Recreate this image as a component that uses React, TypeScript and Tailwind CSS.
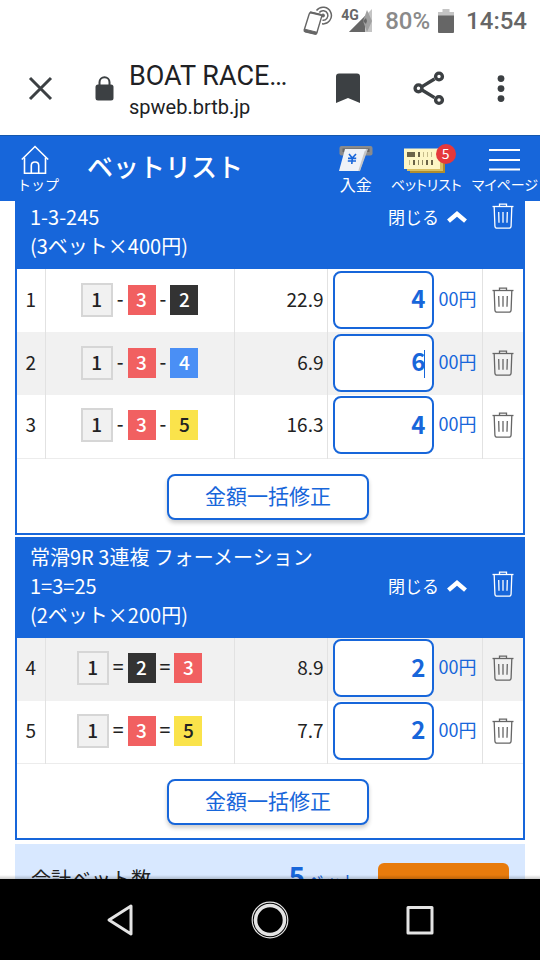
import React from "react";

type Bet = {
  no: number;
  boats: number[];
  odds: string;
  amount: string;
  focused?: boolean;
};

const firstBets: Bet[] = [
  { no: 1, boats: [1, 3, 2], odds: "22.9", amount: "4" },
  { no: 2, boats: [1, 3, 4], odds: "6.9", amount: "6", focused: true },
  { no: 3, boats: [1, 3, 5], odds: "16.3", amount: "4" },
];

const secondBets: Bet[] = [
  { no: 4, boats: [1, 2, 3], odds: "8.9", amount: "2" },
  { no: 5, boats: [1, 3, 5], odds: "7.7", amount: "2" },
];

const boatStyles: Record<number, string> = {
  1: "h-[34px] w-8 border-2 border-[#d6d6d6] bg-[#f1f1f1] text-[#222222]",
  2: "h-[30px] w-7 bg-[#333333] text-white",
  3: "h-[30px] w-7 bg-[#f16061] text-white",
  4: "h-[30px] w-7 bg-[#4a8ff5] text-white",
  5: "h-[30px] w-7 bg-[#fae34b] text-[#222222]",
};

const TrashIcon = () => (
  <svg width="22" height="26" viewBox="0 0 22 26" fill="none" stroke="currentColor" strokeWidth="1.3">
    <path d="M0.5 3.5H21.5" />
    <path d="M7.5 3.5V1.2H14.5V3.5" />
    <path d="M2.2 4L2.9 23Q3 25.2 5 25.2H17Q19 25.2 19.1 23L19.8 4" />
    <path d="M6.7 9L7 19.8M11 9V19.8M15.3 9L15 19.8" />
  </svg>
);

const StatusBar = () => (
  <div className="flex h-[42px] shrink-0 items-center justify-end pr-[13px] font-[Roboto,sans-serif] text-2xl leading-none font-medium">
    <svg width="30" height="30" viewBox="0 0 30 30" fill="none" stroke="#666" className="mr-2">
      <path
        d="M8.5 6.5L17.6 8.6Q19 9 18.7 10.4L13.8 27Q13.4 28.4 12 28L2.2 25.7Q0.9 25.4 1.2 24L6.2 8Q6.8 6.2 8.5 6.5Z"
        strokeWidth="1.4"
      />
      <path d="M1.8 23.2L13.8 26.2L13 28.2L2 25.6Z" fill="#666" strokeWidth="1" />
      <path d="M6.8 6.2L18.4 9" strokeWidth="2" />
      <circle cx="20" cy="9.5" r="1.5" fill="#666" />
      <path d="M16.3 6.5A4.8 4.8 0 1 1 19.5 14.2" strokeWidth="1.5" />
      <path d="M13.5 4.5A8.3 8.3 0 1 1 19 17.8" strokeWidth="1.5" />
    </svg>
    <div className="relative mr-3 h-6 w-8">
      <svg width="32" height="24" viewBox="0 0 32 24">
        <path d="M8 23L31 0V23Z" fill="#c4c4c4" />
        <path d="M8 23L24 7V23Z" fill="#666" />
        <path d="M26 1L31 12L26 23L22 12Z" fill="#a0a0a0" />
        <path d="M22 12L25 9L26 12L25 15Z" fill="#666" />
      </svg>
      <span className="absolute top-0 left-0 text-sm leading-3 font-bold text-[#666]">4G</span>
    </div>
    <span className="mr-2 text-[#8a8a8a]">80%</span>
    <svg width="16" height="24" viewBox="0 0 16 24" className="mr-3">
      <path d="M4.5 0H11.5V3H16V8H0V3H4.5Z" fill="#c4c4c4" />
      <path d="M0 6.5H16V23Q16 24 15 24H1Q0 24 0 23Z" fill="#666" />
    </svg>
    <span className="text-[#666]">14:54</span>
  </div>
);

const BrowserBar = () => (
  <div className="flex h-[93px] shrink-0 items-center bg-white pr-6 pl-7 font-[Roboto,sans-serif] text-[#202124]">
    <button type="button" aria-label="閉じる" className="mr-[42px]">
      <svg width="25" height="25" viewBox="0 0 25 25" stroke="#3c4043" strokeWidth="3">
        <path d="M2 2L23 23M23 2L2 23" />
      </svg>
    </button>
    <svg width="19" height="25" viewBox="0 0 19 25" className="mr-[15px]">
      <path d="M4.5 10V6.2A5 5 0 0 1 14.5 6.2V10" fill="none" stroke="#3c4043" strokeWidth="2" />
      <rect x="0.5" y="8.5" width="18" height="16" rx="2.5" fill="#3c4043" />
    </svg>
    <div className="flex-1 pt-1 whitespace-nowrap">
      <p className="text-[27px] leading-8">BOAT RACE…</p>
      <p className="text-xl leading-[30px]">spweb.brtb.jp</p>
    </div>
    <button type="button" aria-label="ブックマーク" className="mr-[53px]">
      <svg width="24" height="32" viewBox="0 0 24 32" fill="#3c4043">
        <path d="M3 0.5H21Q24 0.5 24 3.5V30L12 25L0 30V3.5Q0 0.5 3 0.5Z" />
      </svg>
    </button>
    <button type="button" aria-label="共有" className="mr-[41px]">
      <svg width="32" height="36" viewBox="0 0 32 36" fill="none" stroke="#3c4043" strokeWidth="3.4">
        <path d="M9 15.6L21.5 8M9 19L21.5 26.6" />
        <circle cx="5.5" cy="17.3" r="3.4" />
        <circle cx="26" cy="5.5" r="3.4" />
        <circle cx="26" cy="29" r="3.4" />
      </svg>
    </button>
    <button type="button" aria-label="メニュー" className="w-[30px]">
      <svg width="30" height="28" viewBox="0 0 30 28" fill="#3c4043">
        <circle cx="15" cy="3.6" r="3.4" />
        <circle cx="15" cy="13.6" r="3.4" />
        <circle cx="15" cy="23.6" r="3.4" />
      </svg>
    </button>
  </div>
);

const AppHeader = () => (
  <header className="flex h-[66px] shrink-0 items-start border-t border-[#1558ad] bg-[#1766da] pt-[9px] pr-0.5 text-sm leading-[18px] whitespace-nowrap text-white">
    <a href="#top" className="ml-[17px] flex w-[42px] flex-col items-center">
      <svg width="28" height="30" viewBox="0 0 28 30" fill="none" stroke="currentColor" strokeWidth="1.6" className="mr-1.5">
        <path d="M0.8 14.5L14 1.5L27.2 14.5" />
        <path d="M3.5 12.5V28.2H24.5V12.5" />
        <path d="M10.3 28V20.5Q10.3 17 14 17Q17.7 17 17.7 20.5V28" />
      </svg>
      トップ
    </a>
    <h1 className="ml-7 flex-1 text-[26px] leading-[42px] font-medium">ベットリスト</h1>
    <a href="#deposit" className="mr-[18px] flex flex-col items-center text-base leading-[18px]">
      <svg width="34" height="30" viewBox="0 0 34 30">
        <rect x="0.5" y="1" width="33" height="9.5" rx="2" fill="#8b8b8b" />
        <rect x="3.5" y="3.5" width="27" height="3.5" fill="#666" />
        <path d="M24 4H29L21 26H15Z" fill="#c4c6c8" />
        <path d="M6 4H27L20 26H0Z" fill="#eef2f7" />
        <path d="M20 26L26.5 6" fill="none" stroke="#c4c6c8" strokeWidth="1.5" />
        <path d="M10 9L13.3 13L17 9M13.3 13L12.8 19M9 13.4H17.2M8.8 16H17" fill="none" stroke="#1766da" strokeWidth="1.6" />
      </svg>
      入金
    </a>
    <a href="#betlist" className="relative mr-2.5 flex flex-col items-center [font-feature-settings:'palt']">
      <svg width="44" height="30" viewBox="0 0 44 30">
        <path d="M6 7H41V28H6Z" fill="#b08d2e" />
        <path d="M3 5H39V26H3Z" fill="#d8bf63" />
        <path d="M0 3.5H36V24H0Z" fill="#fdf6c5" />
        <path d="M3 7H11V12H3ZM14 7H16V12H14Z" fill="#6b6448" />
        <path d="M19 7H20V12H19ZM23 7H24V12H23ZM27 7H28V12H27ZM5 15H6V20H5Z" fill="#c5bb8a" />
        <path d="M9 15H11V20H9ZM22 15H24V20H22ZM27 15H29V20H27Z" fill="#6b6448" />
        <path d="M14 15H15V20H14ZM18 15H19V20H18Z" fill="#8f8862" />
      </svg>
      ベットリスト
      <span className="absolute -top-px right-1.5 flex size-5 items-center justify-center rounded-full bg-[#e5383b] pb-0.5">
        5
      </span>
    </a>
    <a href="#mypage" className="flex flex-col items-center [font-feature-settings:'palt']">
      <svg width="31" height="30" viewBox="0 0 31 30" stroke="currentColor" strokeWidth="2">
        <path d="M0 5H31M0 15H31M0 24.5H31" />
      </svg>
      マイページ
    </a>
  </header>
);

const GroupActions = () => (
  <div className="flex h-[29px] shrink-0 items-center pr-[9px]">
    <button type="button" className="mr-[25px] flex items-center gap-2 text-[17px]">
      閉じる
      <svg width="20" height="13" viewBox="0 0 20 13" fill="none" stroke="currentColor" strokeWidth="4.4">
        <path d="M1.5 11.2L10 3.8L18.5 11.2" />
      </svg>
    </button>
    <button type="button" aria-label="グループを削除" className="pb-0.5">
      <TrashIcon />
    </button>
  </div>
);

const BetTable = ({ bets, separator, startGray }: { bets: Bet[]; separator: string; startGray?: boolean }) => (
  <table className="w-full table-fixed border-collapse text-[19px] leading-7">
    <colgroup>
      <col className="w-7" />
      <col />
      <col className="w-[93px]" />
      <col className="w-[155px]" />
      <col className="w-[41px]" />
    </colgroup>
    <tbody>
      {bets.map((bet, i) => (
        <tr
          key={bet.no}
          className={`h-[63px] last:border-b last:border-[#ececec] ${(i % 2 === 0) === !!startGray ? "bg-[#f1f1f1]" : "bg-white"}`}
        >
          <td className="border-r border-[#e2e2e2] p-0 pb-1 text-center">{bet.no}</td>
          <td className="border-r border-[#e2e2e2] p-0 pb-0.5">
            <div className="flex items-center justify-center">
              {bet.boats.map((boat, j) => (
                <React.Fragment key={j}>
                  {j > 0 && <span className="px-1 pb-1 font-medium">{separator}</span>}
                  <span className={`flex items-center justify-center pb-0.5 font-medium ${boatStyles[boat]}`}>
                    {boat}
                  </span>
                </React.Fragment>
              ))}
            </div>
          </td>
          <td className="border-r border-[#e2e2e2] p-0 pr-[3px] pb-1 text-right">{bet.odds}</td>
          <td className="border-r border-[#e2e2e2] p-0 pb-0.5 pl-[5px]">
            <label className="relative flex items-center gap-[5px] text-lg text-[#1766da]">
              <input
                type="text"
                inputMode="numeric"
                defaultValue={bet.amount}
                className="h-[58px] w-[101px] rounded-lg border-2 border-[#1766da] bg-white pr-1.5 pb-1 text-right text-2xl font-bold outline-none"
              />
              {bet.focused && <span className="absolute top-4 left-[91px] h-7 w-px bg-[#1766da]" />}
              <span className="pb-1">00円</span>
            </label>
          </td>
          <td className="p-0 pb-0.5">
            <button type="button" aria-label={`${bet.no}を削除`} className="flex w-full justify-center text-[#666]">
              <TrashIcon />
            </button>
          </td>
        </tr>
      ))}
    </tbody>
  </table>
);

const BulkEdit = () => (
  <div className="flex justify-center pt-[15px] pr-1 pb-[13px]">
    <button
      type="button"
      className="h-[46px] w-[202px] rounded-lg border-2 border-[#1766da] bg-white pb-0.5 text-[21px] text-[#1766da] shadow-[0_3px_4px_rgba(0,0,0,0.2)]"
    >
      金額一括修正
    </button>
  </div>
);

const App: React.FC = () => {
  return (
    <div className="flex h-screen flex-col overflow-hidden bg-white font-['Noto_Sans_CJK_JP',sans-serif] text-[#222222]">
      <StatusBar />
      <BrowserBar />
      <AppHeader />

      <main className="relative min-h-0 flex-1 overflow-hidden px-[15px]">
        <section className="mb-0.5 border-2 border-t-0 border-[#1766da]">
          <div className="flex items-start justify-between bg-[#1766da] pt-px pb-[9px] pl-[13px] text-xl leading-[29px] text-white">
            <div>
              <p>1-3-245</p>
              <p>(3ベット×400円)</p>
            </div>
            <GroupActions />
          </div>
          <BetTable bets={firstBets} separator="-" />
          <BulkEdit />
        </section>

        <section className="mb-0.5 border-2 border-t-0 border-[#1766da]">
          <div className="flex items-center justify-between bg-[#1766da] pt-[5px] pb-[9px] pl-[13px] text-xl leading-[29px] text-white">
            <div>
              <h2>常滑9R 3連複 フォーメーション</h2>
              <p>1=3=25</p>
              <p>(2ベット×200円)</p>
            </div>
            <GroupActions />
          </div>
          <BetTable bets={secondBets} separator="=" startGray />
          <BulkEdit />
        </section>

        {/* total */}
        <section className="mt-1 flex items-start bg-[#d8e8ff] pt-[19px] pr-4 pb-5 pl-4">
          <p className="flex-1 text-xl leading-8">合計ベット数</p>
          <p className="mr-5 text-[17px] leading-[26px] text-[#1766da]">
            <span className="mr-0.5 text-[28px] font-bold">5</span>ベット
          </p>
          <button type="button" aria-label="投票" className="h-12 w-[131px] rounded-md bg-[#e87b0c]" />
        </section>
        <div className="absolute inset-x-0 bottom-0 h-1 bg-gradient-to-t from-black/20 to-transparent" />
      </main>

      {/* system navigation */}
      <nav className="grid h-[81px] shrink-0 grid-cols-3 place-items-center bg-black px-[45px] text-[#e4e4e4]">
        <button type="button" aria-label="戻る">
          <svg width="32" height="34" viewBox="0 0 32 34" fill="none" stroke="currentColor" strokeWidth="3" strokeLinejoin="round">
            <path d="M27 3L5 17L27 31Z" />
          </svg>
        </button>
        <button type="button" aria-label="ホーム">
          <svg width="38" height="38" viewBox="0 0 38 38" fill="none" stroke="currentColor">
            <circle cx="19" cy="19" r="17.8" strokeWidth="1.2" />
            <circle cx="19" cy="19" r="14.5" strokeWidth="3.6" />
          </svg>
        </button>
        <button type="button" aria-label="履歴">
          <svg width="30" height="30" viewBox="0 0 30 30" fill="none" stroke="currentColor" strokeWidth="3" strokeLinejoin="round">
            <rect x="3" y="2.5" width="24" height="25.5" />
          </svg>
        </button>
      </nav>
    </div>
  );
};

export default App;
